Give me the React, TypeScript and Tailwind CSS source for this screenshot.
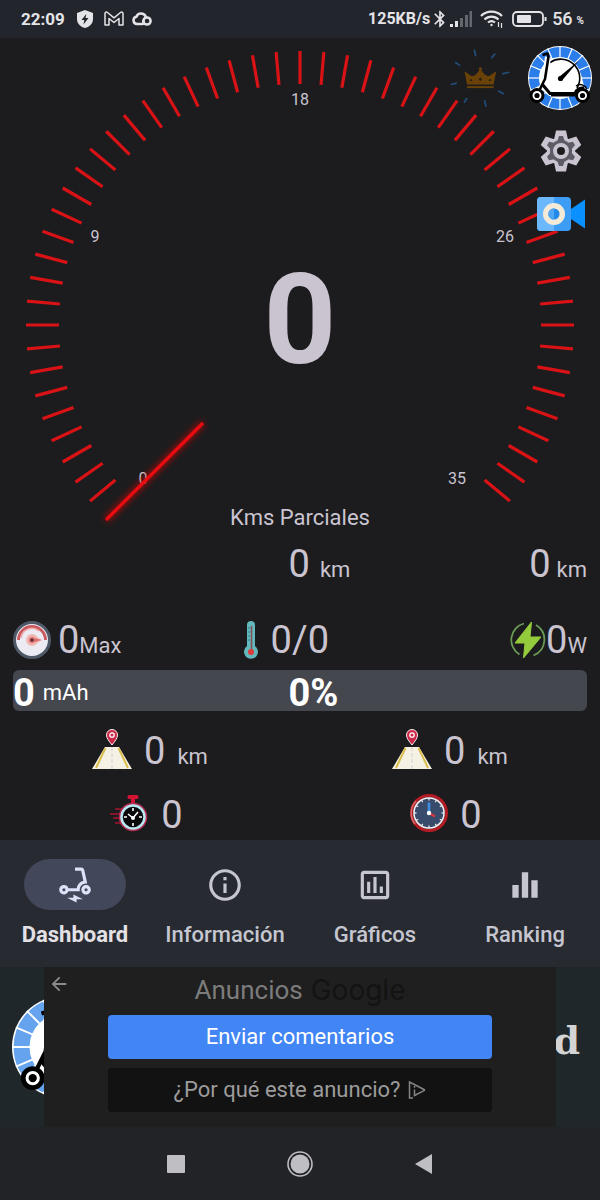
import React from 'react';
import { MdArrowBack, MdBluetooth, MdElectricScooter, MdEqualizer, MdInfoOutline, MdOutlineAssessment } from 'react-icons/md';

const TICK_ANGLES = Array.from({ length: 53 }, (_, i) => -130 + i * 5);

const SCALE_LABELS = [
    { value: '0', x: 143, y: 446 },
    { value: '9', x: 95, y: 204 },
    { value: '18', x: 300, y: 67 },
    { value: '26', x: 505, y: 204 },
    { value: '35', x: 457, y: 446 },
];

const StatusBar: React.FC = () => (
    <header className="flex h-[38px] items-center justify-between bg-[#23252d] pl-[21px] pr-4 text-[#e4e4e8]">
        <div className="flex items-center">
            <span className="text-[17px] font-bold leading-6">22:09</span>
            <svg className="ml-3 h-[18px] w-4" viewBox="0 0 16 18" aria-hidden="true">
                <path d="M8 0L16 3v6c0 5-4 8-8 9-4-1-8-4-8-9V3z" fill="#e4e4e8" />
                <path d="M9.300 4L4.500 10h2.800l-.8 4.500L11.500 8H8.600z" fill="#23252d" />
            </svg>
            <svg className="ml-[11px] h-4 w-5" viewBox="0 0 20 16" fill="none" stroke="#e4e4e8" strokeWidth="1.500" strokeLinejoin="round" aria-hidden="true">
                <path d="M1 14V2.500c0-1.400 1.500-1.900 2.500-1L10 6.800l6.500-5.300c1-.9 2.500-.4 2.500 1V14h-4V7.500l-5 4-5-4V14z" />
            </svg>
            <svg className="ml-2 h-[15px] w-5" viewBox="0 0 20 15" fill="none" stroke="#e4e4e8" strokeWidth="2.500" aria-hidden="true">
                <path d="M11 12H5a3.700 3.700 0 0 1-.6-7.300A5 5 0 0 1 14 5.500" />
                <circle cx="15" cy="9" r="3.600" />
                <path d="M11.500 8v5" />
            </svg>
        </div>
        <div className="flex items-center">
            <span className="text-[16px] font-bold leading-6">125KB/s</span>
            <MdBluetooth className="h-5 w-5" />
            <svg className="h-4 w-[22px]" viewBox="0 0 22 16" aria-hidden="true">
                <path d="M0 13h3v3H0zM5 10h3v6H5z" fill="#e4e4e8" />
                <path d="M10 7h3v9h-3zM15 4h3v12h-3zM19.500 0h2.500v16h-2.500z" fill="#65676e" />
            </svg>
            <svg className="ml-2 h-[18px] w-6" viewBox="0 0 24 18" fill="none" stroke="#e4e4e8" strokeWidth="2.200" aria-hidden="true">
                <path d="M1 6a15 15 0 0 1 21 0M4.500 9.500a10 10 0 0 1 14 0M8 12.500a5.500 5.500 0 0 1 7 0" />
                <circle cx="11.500" cy="15" r="1.200" fill="#e4e4e8" stroke="none" />
                <path d="M18.500 12v5M21.500 13v5" strokeWidth="1.200" />
            </svg>
            <svg className="ml-2 h-4 w-9" viewBox="0 0 36 16" aria-hidden="true">
                <rect x="1" y="1" width="30" height="14" rx="4" fill="none" stroke="#e4e4e8" strokeWidth="1.800" />
                <rect x="5" y="4" width="14" height="8" rx="1" fill="#e4e4e8" />
                <rect x="32.500" y="6" width="2" height="4" fill="#e4e4e8" />
            </svg>
            <span className="ml-1 text-[18px] font-medium leading-6">56</span>
            <span className="ml-1 mt-1 text-[10px] font-bold leading-4">%</span>
        </div>
    </header>
);

interface ScooterLogoProps {
    className: string;
    ring: string;
    shift?: string;
}

const ScooterLogo: React.FC<ScooterLogoProps> = ({ className, ring, shift }) => (
    <svg className={className} viewBox="0 0 64 64" aria-hidden="true">
        <circle cx="32" cy="32" r="32" fill="#fff" />
        <circle cx="32" cy="32" r="26" fill="none" stroke={ring} strokeWidth="10" />
        {Array.from({ length: 16 }, (_, i) => (
            <path key={i} d="M32 0V12" stroke="#fff" strokeWidth="1.200" transform={`rotate(${i * 22.5} 32 32)`} />
        ))}
        <path d="M20 14L14 40l8 8h24l10-8-3-12z" fill="#fff" />
        <circle cx="32" cy="32" r="20.500" fill="#fff" />
        <path d="M22 16.500A19 19 0 0 1 49 42" fill="none" stroke="#000" strokeWidth="1.600" />
        <path d="M31 31L51 14.500 34 34.500z" fill="#000" />
        <circle cx="32.500" cy="32.500" r="2.600" fill="#000" />
        <g transform={shift}>
            <path d="M8.500 49L16 38l4-27" fill="none" stroke="#fff" strokeWidth="6" />
            <path d="M14.500 9l5-1.500 1 3L17 33 9 49" fill="none" stroke="#000" strokeWidth="2.600" strokeLinejoin="round" />
            <path d="M14 38l8 9.500h25c1-4 5-6 9-5.500" fill="none" stroke="#000" strokeWidth="3" />
            <path d="M23 48.500h24" stroke="#000" strokeWidth="4" />
            <path d="M48 40c4-3 9-1 11 3" fill="none" stroke="#000" strokeWidth="1.500" />
            {[9, 54.5].map((cx) => (
                <g key={cx}>
                    <circle cx={cx} cy="49.500" r="6" fill="#fff" stroke="#000" strokeWidth="3" />
                    <circle cx={cx} cy="49.500" r="2.600" fill="#000" />
                </g>
            ))}
        </g>
    </svg>
);

const CrownIcon: React.FC = () => (
    <svg className="h-[63px] w-[60px]" viewBox="0 0 180 190" aria-hidden="true">
        <path
            d="M73 8l4 20M136 20l-12 14M178 76l-21 5M162 142l-17-10M108 180l-4-20M42 168l9-14M2 113l18-4M15 46l15 10"
            stroke="#1f4f7d"
            strokeWidth="5"
        />
        <path d="M43 73l20 14c9 3 19-6 24-17h8c5 11 15 20 24 17l20-14-8 40H51z" fill="#6a4208" />
        <circle cx="91" cy="66" r="5" fill="#6a4208" />
        <path d="M51 118h80v6H51z" fill="#6a4208" />
        <path d="M63 96l4 4-4 4-4-4zM91 91l5 6-5 6-5-6zM120 96l4 4-4 4-4-4z" fill="#2b200f" />
    </svg>
);

const GearIcon: React.FC = () => (
    <svg className="h-[42px] w-[42px]" viewBox="-21 -21 42 42" aria-hidden="true">
        <circle r="14" fill="#cac4d0" />
        {[0, 60, 120, 180, 240, 300].map((angle) => (
            <g key={angle} transform={`rotate(${angle})`}>
                <path d="M-7-11L-5-20.500H5L7-11z" fill="#cac4d0" />
            </g>
        ))}
        <circle r="11" fill="#5e5b64" />
        {[0, 60, 120, 180, 240, 300].map((angle) => (
            <path key={angle} d="M-4-9L-2-15H2L4-9z" fill="#5e5b64" transform={`rotate(${angle})`} />
        ))}
        <circle r="6" fill="#1c1c1e" stroke="#cac4d0" strokeWidth="4" />
    </svg>
);

const CameraIcon: React.FC = () => (
    <svg className="h-[34px] w-12" viewBox="0 0 48 34" aria-hidden="true">
        <path d="M34 12L48 2.500v29L34 22z" fill="#0a91ff" />
        <rect width="34" height="34" rx="4" fill="#3d9df5" />
        <path d="M4 0h13v34H4a4 4 0 0 1-4-4V4a4 4 0 0 1 4-4z" fill="#6bb8ff" />
        <circle cx="17" cy="17" r="8.300" fill="#2489e8" stroke="#f3ead8" strokeWidth="5.500" />
        <path d="M17 11.200a5.700 5.700 0 0 0 0 11.500z" fill="#50a8f5" />
    </svg>
);

const Speedometer: React.FC = () => (
    <section className="relative">
        <svg className="block w-full overflow-visible" viewBox="0 0 600 466" role="img" aria-label="0 km/h" fontFamily="Roboto, sans-serif">
            <defs>
                <filter id="glow" x="-20%" y="-20%" width="140%" height="140%">
                    <feGaussianBlur stdDeviation="3" />
                </filter>
            </defs>
            {TICK_ANGLES.map((angle) => (
                <path key={angle} d="M300 13V46" stroke="#d91216" strokeWidth="3.200" transform={`rotate(${angle} 300 287)`} />
            ))}
            {SCALE_LABELS.map(({ value, x, y }) => (
                <text key={value} x={x} y={y} fontSize="16" fill="#cac4d0" textAnchor="middle">
                    {value}
                </text>
            ))}
            <path d="M106 482L203 385" stroke="#e00000" strokeWidth="6" filter="url(#glow)" opacity="0.700" />
            <path d="M106 482L203 385" stroke="#e80c10" strokeWidth="3.200" />
            <text x="300" y="325" fontSize="127" fontWeight="700" fill="#cac4d0" textAnchor="middle">
                0
            </text>
        </svg>
        <div className="absolute right-2 top-2 flex flex-col items-end">
            <div className="flex gap-[18px]">
                <button type="button" aria-label="Premium">
                    <CrownIcon />
                </button>
                <button type="button" aria-label="Scooter">
                    <ScooterLogo className="h-16 w-16" ring="#2b7de9" />
                </button>
            </div>
            <button type="button" aria-label="Ajustes" className="mr-2.5 mt-5">
                <GearIcon />
            </button>
            <button type="button" aria-label="Cámara" className="mr-[7px] mt-[25px]">
                <CameraIcon />
            </button>
        </div>
    </section>
);

const MaxSpeedIcon: React.FC = () => (
    <svg className="h-[38px] w-[38px]" viewBox="0 0 38 38" aria-hidden="true">
        <circle cx="19" cy="19" r="17.500" fill="#eceaf3" stroke="#4e5968" strokeWidth="3" />
        <path d="M5.500 19a13.500 13.500 0 0 1 27 0" fill="none" stroke="#c95a60" strokeWidth="3" />
        <path d="M8 17a11 11 0 0 1 18-7" fill="none" stroke="#efa9a6" strokeWidth="1.500" />
        <path d="M19 13c4 0 5 4 10 6-5 2-6 6-10 6a6 6 0 0 1 0-12z" fill="#f0b5ae" />
        <path d="M19 16.500l10 2.500-10 2.500z" fill="#d96e6b" />
        <circle cx="19" cy="19" r="3" fill="#d96e6b" />
        <circle cx="19" cy="19" r="1.600" fill="#472b35" />
    </svg>
);

const ThermometerIcon: React.FC = () => (
    <svg className="h-[38px] w-4" viewBox="0 0 16 38" aria-hidden="true">
        <path d="M4 4a4 4 0 0 1 8 0v21a7 7 0 1 1-8 0z" fill="#62b8bb" />
        <path d="M5 7h2M5 11h2M5 15h2M5 19h2" stroke="#287b84" />
        <path d="M8.500 5v26" stroke="#8c4b4f" strokeWidth="1.500" />
        <circle cx="8" cy="31" r="3" fill="#df3b3b" />
    </svg>
);

const PowerIcon: React.FC = () => (
    <svg className="h-[38px] w-9" viewBox="0 0 36 38" aria-hidden="true">
        <path d="M14 2.500a17 17 0 0 0-4.500 31M23.500 34.500A17 17 0 0 0 26 4" fill="none" stroke="#6a9a55" strokeWidth="1.800" />
        <path d="M21.500 1L5 22h10l-1.500 15L31 16H20z" fill="#93cb3c" stroke="#93cb3c" strokeLinejoin="round" />
    </svg>
);

const RoadIcon: React.FC = () => (
    <svg className="h-10 w-10" viewBox="0 0 40 40" aria-hidden="true">
        <path d="M13 18h14l13 22H0z" fill="#f5f1e4" />
        <path d="M13.500 19L4 39M26.500 19L36 39" stroke="#d9bd4b" strokeWidth="2" />
        <path d="M20 18v22" stroke="#dcdcdc" strokeWidth="1.500" strokeDasharray="4 2" />
        <path d="M20 16c-3-4-5.500-6.500-5.500-10a5.500 5.500 0 0 1 11 0c0 3.500-2.500 6-5.500 10z" fill="#cc2748" stroke="#f4e9eb" />
        <circle cx="20" cy="6" r="2.200" fill="#cc2748" stroke="#fff" strokeWidth="1.300" />
    </svg>
);

const StopwatchIcon: React.FC = () => (
    <svg className="h-[38px] w-10" viewBox="0 0 40 38" aria-hidden="true">
        <path d="M6 15h8M1 20h10M4 24h8M6 29h8" stroke="#a71432" strokeWidth="1.500" />
        <path d="M20 1h8c2 0 2 4 0 4h-2v4h-4V5h-2c-2 0-2-4 0-4z" fill="#d31234" />
        <circle cx="24" cy="23" r="13" fill="#08090b" stroke="#b22c50" strokeWidth="2.500" />
        <circle cx="24" cy="23" r="11.500" fill="none" stroke="#b8e9f2" strokeWidth="2.500" />
        <path d="M24 14v3M24 29v3M15 23h3M30 23h3M19 20l5 4 5-6" fill="none" stroke="#fff" strokeWidth="1.600" />
        <circle cx="24" cy="24" r="2" fill="#fff" />
    </svg>
);

const ClockIcon: React.FC = () => (
    <svg className="h-[38px] w-[38px]" viewBox="0 0 38 38" aria-hidden="true">
        <circle cx="19" cy="19" r="17.500" fill="#394b6a" stroke="#b51b22" strokeWidth="3" />
        <path d="M6 7A17.500 17.500 0 0 0 5 30" fill="none" stroke="#d76a6c" strokeWidth="1.500" />
        <circle cx="19" cy="19" r="15" fill="none" stroke="#f1eeee" strokeWidth="1.500" />
        {Array.from({ length: 12 }, (_, i) => (
            <path key={i} d="M19 4v2.500" stroke="#f1eeee" strokeWidth="1.200" transform={`rotate(${i * 30} 19 19)`} />
        ))}
        <path d="M19 19V8.500" stroke="#3e8de0" strokeWidth="2.600" />
        <path d="M19 19l6 3.500" stroke="#d83640" strokeWidth="2.400" />
        <circle cx="19" cy="19" r="2.200" fill="#fff" />
    </svg>
);

const Distance: React.FC = () => (
    <div className="flex h-10 flex-1 items-center justify-center gap-3">
        <RoadIcon />
        <div className="mt-1 flex items-baseline gap-3">
            <span className="text-[38px] leading-10">0</span>
            <span className="text-[22px] leading-7">km</span>
        </div>
    </div>
);

const Elapsed: React.FC<{ icon: React.ReactNode }> = ({ icon }) => (
    <div className="flex h-10 flex-1 items-center justify-center gap-3 pr-2">
        {icon}
        <span className="mt-1 text-[38px] leading-10">0</span>
    </div>
);

const TABS = [
    { label: 'Dashboard', Icon: MdElectricScooter, active: true },
    { label: 'Información', Icon: MdInfoOutline, active: false },
    { label: 'Gráficos', Icon: MdOutlineAssessment, active: false },
    { label: 'Ranking', Icon: MdEqualizer, active: false },
];

const TabBar: React.FC = () => (
    <nav className="grid h-[127px] grid-cols-4 bg-[#272a31] pt-[19px]">
        {TABS.map(({ label, Icon, active }) => (
            <a key={label} href="#" className="flex flex-col items-center gap-[11px]">
                <span
                    className={`flex h-[51px] w-[102px] items-center justify-center rounded-full ${
                        active ? 'bg-[#42475a] text-[#dde2f9]' : 'text-[#c5c6d0]'
                    }`}
                >
                    <Icon className="h-[38px] w-[38px]" />
                </span>
                <span className={`text-[22px] leading-7 ${active ? 'font-bold text-[#e3e1e6]' : 'font-medium text-[#c5c6d0]'}`}>
                    {label}
                </span>
            </a>
        ))}
    </nav>
);

const AdBanner: React.FC = () => (
    <aside className="relative flex h-40 items-center justify-between bg-[#20272a] pl-3 pr-5">
        <ScooterLogo className="h-[102px] w-[102px]" ring="#65a3ee" shift="translate(4 2)" />
        <span className="pb-3 font-['DejaVu_Serif',serif] text-[38px] font-bold leading-10 text-[#d4d4d4]">d</span>
        <div className="absolute inset-x-11 inset-y-0 bg-[#1f1f1f] px-16 pt-2">
            <button type="button" aria-label="Atrás" className="absolute left-1 top-1.5 text-[#8b8b8b]">
                <MdArrowBack className="h-[22px] w-[22px]" />
            </button>
            <p className="flex h-[30px] items-center justify-center gap-2 text-[26px] leading-8 text-[#7c7c7c]">
                Anuncios
                <span className="font-['Inter',sans-serif] text-[28px] leading-8 text-[#131313]">Google</span>
            </p>
            <button type="button" className="mt-2.5 block h-11 w-full rounded-sm bg-[#4285f4] text-[22px] leading-7 text-white">
                Enviar comentarios
            </button>
            <button
                type="button"
                className="mt-[9px] flex h-11 w-full items-center justify-center gap-2 rounded-sm bg-[#121212] text-[22px] leading-7 text-[#9c9c9c]"
            >
                ¿Por qué este anuncio?
                <svg className="h-5 w-[18px]" viewBox="0 0 18 20" fill="none" stroke="#858585" strokeWidth="1.500" aria-hidden="true">
                    <path d="M5 18H1.500V2L16 9.500c.7.4.7.8 0 1.200L6.500 15.500V9.500M6.500 6v1.800" />
                </svg>
            </button>
        </div>
    </aside>
);

const SystemBar: React.FC = () => (
    <footer className="flex h-[73px] items-center justify-center gap-[101px] bg-[#222327]">
        <button type="button" aria-label="Recientes">
            <svg className="h-[18px] w-[18px]" viewBox="0 0 18 18">
                <rect width="18" height="18" rx="1" fill="#bfbfc3" />
            </svg>
        </button>
        <button type="button" aria-label="Inicio">
            <svg className="h-7 w-7" viewBox="0 0 28 28">
                <circle cx="14" cy="14" r="12" fill="none" stroke="#bfbfc3" strokeWidth="1.600" />
                <circle cx="14" cy="14" r="9.500" fill="#bfbfc3" />
            </svg>
        </button>
        <button type="button" aria-label="Atrás">
            <svg className="h-5 w-[18px]" viewBox="0 0 18 20">
                <path d="M17 0v20L0 10z" fill="#bfbfc3" />
            </svg>
        </button>
    </footer>
);

const App: React.FC = () => {
    return (
        <div className="flex min-h-screen flex-col bg-[#1c1c1e] font-['Roboto',sans-serif] text-[#cac4d0]">
            <StatusBar />
            <main className="flex-1">
                <Speedometer />
                <h1 className="text-center text-[22px] leading-7">Kms Parciales</h1>
                <div className="mt-3 flex justify-between px-[13px]">
                    <div className="w-[48%]" />
                    <p className="flex flex-1 items-baseline gap-2.5">
                        <span className="text-[38px] leading-10">0</span>
                        <span className="text-[22px] leading-7">km</span>
                    </p>
                    <p className="flex items-baseline gap-1.5">
                        <span className="text-[38px] leading-10">0</span>
                        <span className="text-[22px] leading-7">km</span>
                    </p>
                </div>
                <div className="mt-9 flex h-10 px-[13px]">
                    <div className="flex w-[40%] items-center gap-[7px]">
                        <MaxSpeedIcon />
                        <p className="flex items-baseline">
                            <span className="text-[38px] leading-10">0</span>
                            <span className="text-[22px] leading-7">Max</span>
                        </p>
                    </div>
                    <div className="flex flex-1 items-center gap-3">
                        <ThermometerIcon />
                        <span className="text-[38px] leading-10">0/0</span>
                    </div>
                    <div className="flex items-center">
                        <PowerIcon />
                        <p className="flex items-baseline">
                            <span className="text-[38px] leading-10">0</span>
                            <span className="text-[22px] leading-7">W</span>
                        </p>
                    </div>
                </div>
                <div className="mx-[13px] mt-2.5 flex h-[41px] items-center rounded-md bg-[#45474f] pt-1 text-white">
                    <p className="flex w-[48%] items-center gap-2">
                        <span className="text-[38px] font-bold leading-10">0</span>
                        <span className="text-[22px] leading-7">mAh</span>
                    </p>
                    <span className="text-[38px] font-bold leading-10">0%</span>
                </div>
                <div className="mt-[18px] flex">
                    <Distance />
                    <Distance />
                </div>
                <div className="mb-[7px] mt-6 flex">
                    <Elapsed icon={<StopwatchIcon />} />
                    <Elapsed icon={<ClockIcon />} />
                </div>
            </main>
            <TabBar />
            <AdBanner />
            <SystemBar />
        </div>
    );
};

export default App;
